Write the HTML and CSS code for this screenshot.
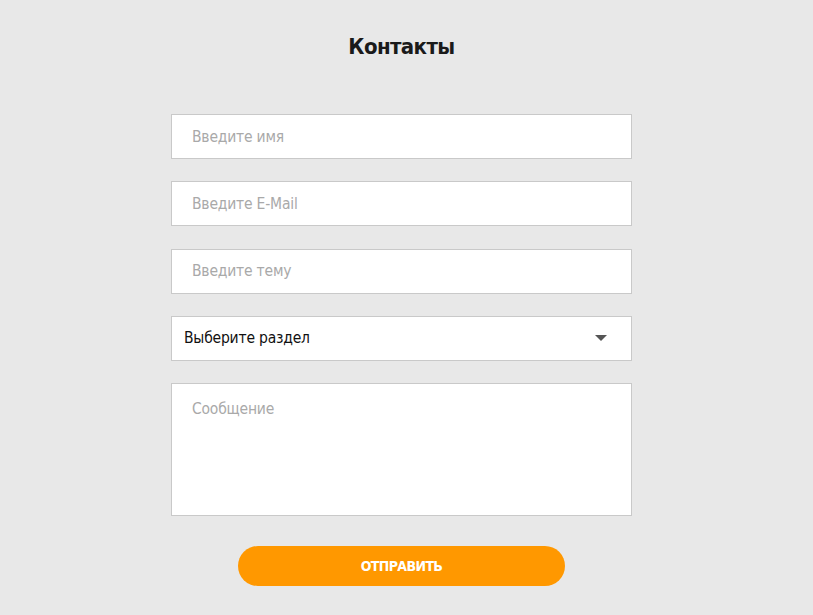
FILE: index.html
```html
<!DOCTYPE html>
<html lang="ru">
<head>
<meta charset="utf-8">
<title>Контакты</title>
<link rel="stylesheet" href="styles.css">
</head>
<body>
<main class="page">
  <h1 class="title">Контакты</h1>
  <form class="form">
    <input class="field" type="text" placeholder="Введите имя">
    <input class="field" type="email" placeholder="Введите E-Mail">
    <input class="field" type="text" placeholder="Введите тему">
    <div class="select">
      <span class="select-text">Выберите раздел</span>
      <svg class="select-arrow" width="12" height="6" viewBox="0 0 12 6"><path d="M0 0H12L6 6Z" fill="#555"/></svg>
    </div>
    <textarea class="field area" placeholder="Сообщение"></textarea>
    <button class="btn" type="button">ОТПРАВИТЬ</button>
  </form>
</main>
</body>
</html>
```
FILE: styles.css
```css
html, body {
  margin: 0;
  padding: 0;
  background: #e8e8e8;
}
body {
  font-family: "DejaVu Sans Condensed", "Liberation Sans", sans-serif;
  color: #222;
}
.page {
  display: flex;
  flex-direction: column;
  align-items: center;
  padding-top: 31px;
  padding-right: 10px;
}
.title {
  margin: 0;
  font-size: 22px;
  line-height: 32px;
  font-weight: 700;
  color: #1a1a1a;
  letter-spacing: -0.6px;
}
.form {
  margin-top: 51px;
  width: 461px;
  display: flex;
  flex-direction: column;
  gap: 22.25px;
  align-items: center;
}
.field {
  box-sizing: border-box;
  width: 461px;
  height: 45px;
  border: 1px solid #c9c9c9;
  background: #fff;
  padding: 0 20px;
  font-family: inherit;
  font-size: 15.5px;
  letter-spacing: -0.2px;
  color: #333;
  outline: none;
  margin: 0;
}
.field::placeholder {
  color: #a9a9a9;
}
.area {
  height: 133px;
  padding-top: 16px;
  resize: none;
  display: block;
}
.select {
  box-sizing: border-box;
  width: 461px;
  height: 45px;
  border: 1px solid #c9c9c9;
  background: #fff;
  display: flex;
  align-items: center;
  justify-content: space-between;
  padding: 0 24px 0 12px;
}
.select-text {
  font-size: 15.5px;
  letter-spacing: -0.2px;
  color: #111;
}
.btn {
  margin-top: 8px;
  width: 327px;
  height: 40px;
  border: none;
  border-radius: 20px;
  background: #ff9800;
  color: #fff;
  font-family: inherit;
  font-weight: 700;
  font-size: 14px;
  letter-spacing: -0.6px;
}
```
